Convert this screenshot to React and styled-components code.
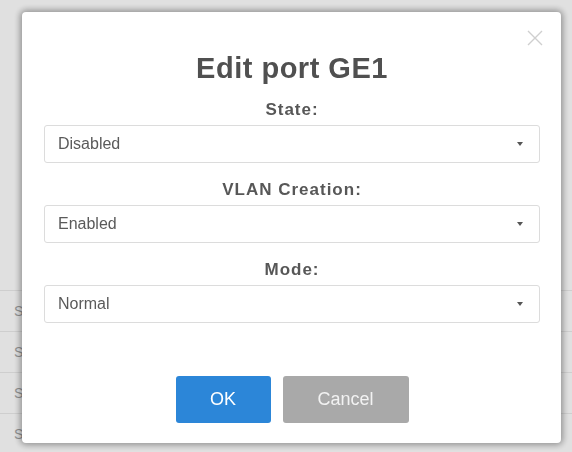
import React from "react";
import styled, { createGlobalStyle } from "styled-components";

const GlobalStyle = createGlobalStyle`
  html, body {
    margin: 0;
    padding: 0;
    background: #ececec;
    font-family: "Liberation Sans", Arial, sans-serif;
  }
`;

// the port table that sits behind the dialog
const PortTable = styled.div`
  padding-top: 290px;
  width: 572px;
  height: 452px;
  box-sizing: border-box;
  overflow: hidden;
`;

const PortRow = styled.div`
  height: 40px;
  display: flex;
  align-items: center;
  padding-left: 14px;
  border-top: 1px solid #dadada;
  font-size: 14px;
  color: #9a9a9a;
`;

const Backdrop = styled.div`
  position: fixed;
  inset: 0;
  background: rgba(0, 0, 0, 0.05);
  display: flex;
  align-items: flex-start;
  padding: 12px 11px 0 22px;
`;

const Modal = styled.div`
  position: relative;
  width: 539px;
  height: 431px;
  box-sizing: border-box;
  background: #fff;
  border-radius: 4px;
  box-shadow: 0 0 6px 2px rgba(0, 0, 0, 0.35);
  padding: 38px 21px 0 22px;
  display: flex;
  flex-direction: column;
`;

const Close = styled.button`
  position: absolute;
  top: 16px;
  right: 16px;
  width: 20px;
  height: 20px;
  padding: 0;
  border: 0;
  background: none;
  display: flex;
  align-items: center;
  justify-content: center;
`;

const Title = styled.h2`
  margin: 0 0 14px;
  height: 36px;
  line-height: 36px;
  text-align: center;
  font-size: 29px;
  font-weight: bold;
  letter-spacing: 0.5px;
  color: #505050;
`;

const Field = styled.div`
  display: flex;
  flex-direction: column;
  gap: 5px;
  margin-bottom: 17px;
`;

const Label = styled.label`
  height: 20px;
  line-height: 20px;
  text-align: center;
  font-size: 17px;
  font-weight: bold;
  letter-spacing: 1px;
  color: #575757;
`;

const Select = styled.div`
  height: 38px;
  box-sizing: border-box;
  border: 1px solid #dcdcdc;
  border-radius: 3px;
  display: flex;
  align-items: center;
  justify-content: space-between;
  padding: 0 16px 0 13px;
  font-size: 16px;
  color: #5a5a5a;
`;

const Caret = styled.span`
  width: 0;
  height: 0;
  border-left: 3.5px solid transparent;
  border-right: 3.5px solid transparent;
  border-top: 4px solid #555;
`;

const Actions = styled.div`
  margin-top: 36px;
  display: flex;
  justify-content: center;
  gap: 12px;
`;

const Button = styled.button`
  width: ${(p) => p.$width}px;
  height: 47px;
  border: 0;
  border-radius: 3px;
  background: ${(p) => (p.$primary ? "#2c86d8" : "#a9a9a9")};
  color: ${(p) => (p.$primary ? "#fff" : "#f2f2f2")};
  font-family: inherit;
  font-size: 18px;
`;

const fields = [
  { label: "State:", value: "Disabled" },
  { label: "VLAN Creation:", value: "Enabled" },
  { label: "Mode:", value: "Normal" },
];

export default function App() {
  return (
    <>
      <GlobalStyle />
      <PortTable>
        <PortRow>Stat</PortRow>
        <PortRow>Stat</PortRow>
        <PortRow>Stat</PortRow>
        <PortRow>Stat</PortRow>
      </PortTable>
      <Backdrop>
        <Modal>
          <Close aria-label="Close">
            <svg width="16" height="16" viewBox="0 0 16 16">
              <path d="M1 1 L15 15 M15 1 L1 15" stroke="#cfcfcf" strokeWidth="1.4" fill="none" />
            </svg>
          </Close>
          <Title>Edit port GE1</Title>
          {fields.map((f) => (
            <Field key={f.label}>
              <Label>{f.label}</Label>
              <Select>
                {f.value}
                <Caret />
              </Select>
            </Field>
          ))}
          <Actions>
            <Button $primary $width={95}>OK</Button>
            <Button $width={126}>Cancel</Button>
          </Actions>
        </Modal>
      </Backdrop>
    </>
  );
}
